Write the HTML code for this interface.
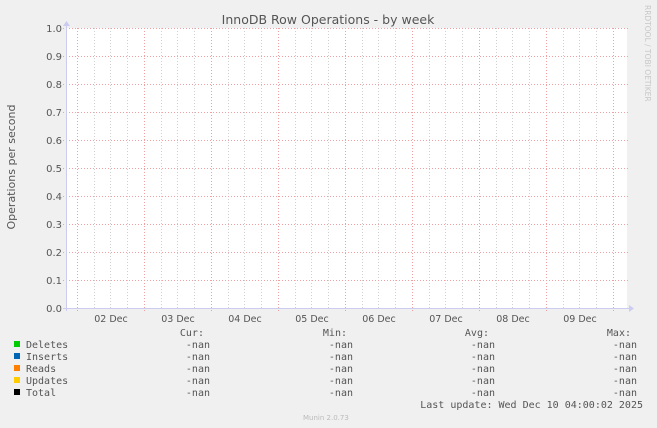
<!DOCTYPE html>
<html><head><meta charset="utf-8"><style>
html,body{margin:0;padding:0;background:#f0f0f0;}
svg{display:block}
.s{font-family:"DejaVu Sans","Liberation Sans",sans-serif;}
.m{font-family:"DejaVu Sans Mono","Liberation Mono",monospace;font-size:10px;fill:#555;}
</style></head><body>
<svg width="657" height="428" xmlns="http://www.w3.org/2000/svg">
<rect width="657" height="428" fill="#f0f0f0"/>
<rect x="66" y="28" width="561" height="280" fill="#fff"/>
<g stroke="#d0d0d0" stroke-width="1" stroke-dasharray="1,2">
<path d="M94.5 28V308M110.5 28V308M127.5 28V308M161.5 28V308M177.5 28V308M194.5 28V308M228.5 28V308M244.5 28V308M261.5 28V308M295.5 28V308M311.5 28V308M328.5 28V308M362.5 28V308M378.5 28V308M395.5 28V308M429.5 28V308M445.5 28V308M462.5 28V308M496.5 28V308M512.5 28V308M529.5 28V308M563.5 28V308M579.5 28V308M596.5 28V308"/>
</g>
<g stroke="#f0a0a0" stroke-width="1" stroke-dasharray="1,2">
<path d="M77.5 28V312M144.5 28V312M211.5 28V312M278.5 28V312M345.5 28V312M412.5 28V312M479.5 28V312M546.5 28V312M613.5 28V312"/>
<path d="M63 28.5H629M63 56.5H629M63 84.5H629M63 112.5H629M63 140.5H629M63 168.5H629M63 196.5H629M63 224.5H629M63 252.5H629M63 280.5H629"/>
</g>
<path d="M66.5 25V311M63 308.5H630" stroke="#ccccf0" stroke-width="1"/>
<path d="M63 26L66.5 21L70 26Z M629 305L634 308.5L629 312Z" fill="#ccccf0"/>
<g class="s" font-size="10" fill="#555" text-anchor="end">
<text x="62" y="32">1.0</text><text x="62" y="60">0.9</text><text x="62" y="88">0.8</text>
<text x="62" y="116">0.7</text><text x="62" y="144">0.6</text><text x="62" y="172">0.5</text>
<text x="62" y="200">0.4</text><text x="62" y="228">0.3</text><text x="62" y="256">0.2</text>
<text x="62" y="284">0.1</text><text x="62" y="312">0.0</text>
</g>
<g class="s" font-size="9.5" fill="#555" text-anchor="middle">
<text x="111" y="322">02 Dec</text><text x="178" y="322">03 Dec</text><text x="245" y="322">04 Dec</text>
<text x="312" y="322">05 Dec</text><text x="379" y="322">06 Dec</text><text x="446" y="322">07 Dec</text>
<text x="513" y="322">08 Dec</text><text x="580" y="322">09 Dec</text>
</g>
<text class="s" x="328" y="24" font-size="12.5" fill="#555" text-anchor="middle">InnoDB Row Operations - by week</text>
<text class="s" transform="translate(15,167) rotate(-90)" font-size="11" fill="#555" text-anchor="middle">Operations per second</text>
<text class="s" transform="translate(645,5) rotate(90)" font-size="7.5" fill="#c8c8c8">RRDTOOL / TOBI OETIKER</text>
<rect x="14" y="341" width="6" height="6" fill="#00cc00"/>
<rect x="14" y="353" width="6" height="6" fill="#0066b3"/>
<rect x="14" y="365" width="6" height="6" fill="#ff8000"/>
<rect x="14" y="377" width="6" height="6" fill="#ffcc00"/>
<rect x="14" y="389" width="6" height="6" fill="#000"/>
<g class="m">
<text x="26" y="348">Deletes</text><text x="26" y="360">Inserts</text><text x="26" y="372">Reads</text>
<text x="26" y="384">Updates</text><text x="26" y="396">Total</text>
</g>
<g class="m" text-anchor="end">
<text x="204" y="336">Cur:</text><text x="347" y="336">Min:</text><text x="489" y="336">Avg:</text><text x="631" y="336">Max:</text>
<g>
<text x="210" y="348">-nan</text><text x="210" y="360">-nan</text><text x="210" y="372">-nan</text><text x="210" y="384">-nan</text><text x="210" y="396">-nan</text>
<text x="353" y="348">-nan</text><text x="353" y="360">-nan</text><text x="353" y="372">-nan</text><text x="353" y="384">-nan</text><text x="353" y="396">-nan</text>
<text x="495" y="348">-nan</text><text x="495" y="360">-nan</text><text x="495" y="372">-nan</text><text x="495" y="384">-nan</text><text x="495" y="396">-nan</text>
<text x="637" y="348">-nan</text><text x="637" y="360">-nan</text><text x="637" y="372">-nan</text><text x="637" y="384">-nan</text><text x="637" y="396">-nan</text>
</g>
<text x="643" y="408">Last update: Wed Dec 10 04:00:02 2025</text>
</g>
<text class="s" x="303" y="420" font-size="7" fill="#bbb">Munin 2.0.73</text>
</svg>
</body></html>
